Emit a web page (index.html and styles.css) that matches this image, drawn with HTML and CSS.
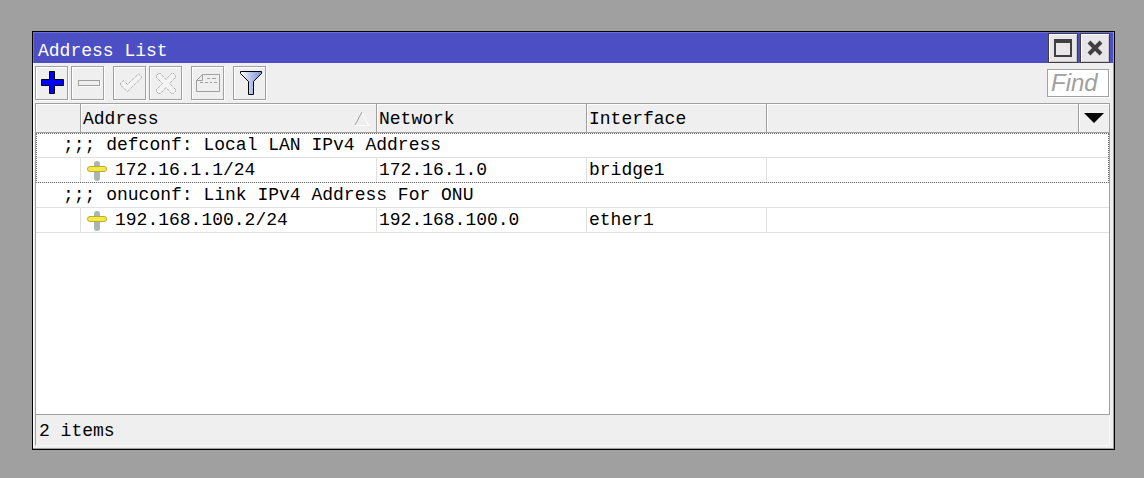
FILE: index.html
```html
<!DOCTYPE html>
<html lang="en">
<head>
<meta charset="utf-8">
<title>Address List</title>
<link rel="stylesheet" href="styles.css">
</head>
<body>
<main class="window">
  <header class="titlebar">
    <h1 class="title">Address List</h1>
    <button class="win-btn" aria-label="Maximize"><svg width="28" height="28" viewBox="0 0 28 28"><path d="M5 5H23V23H5ZM7 9V21H21V9Z" fill="#404040" fill-rule="evenodd"/></svg></button>
    <button class="win-btn" aria-label="Close"><svg width="28" height="28" viewBox="0 0 28 28"><path d="M8 8L20 20M20 8L8 20" stroke="#404040" stroke-width="4"/></svg></button>
  </header>
  <div class="toolbar">
    <div class="group">
      <button class="tool" aria-label="Add"><svg width="31" height="32" viewBox="0 0 31 32"><path d="M13.500 4.500H18.500V12.500H27.500V18.500H18.500V26.500H13.500V18.500H5.500V12.500H13.500Z" fill="#00f" stroke="#000"/></svg></button>
      <button class="tool" aria-label="Remove"><svg width="31" height="32" viewBox="0 0 31 32"><path d="M7 19.500H28.500V14" fill="none" stroke="#fff"/><rect x="6.500" y="13.500" width="21" height="5" fill="#efefef" stroke="#a0a0a0"/></svg></button>
    </div>
    <div class="group">
      <button class="tool" aria-label="Enable"><svg width="31" height="32" viewBox="0 0 31 32"><path d="M6.500 16.500L9.500 13.500L13.500 17.500L24.500 7L27.500 9.500V11L13.500 24.500L6.500 18Z" fill="#f4f4f4" stroke="#909090" stroke-dasharray="1 1"/></svg></button>
      <button class="tool" aria-label="Disable"><svg width="31" height="32" viewBox="0 0 31 32"><path d="M8.500 6.500H10.500L16 12.500L21.500 6.500H23.500L25.500 8.500V10.500L19.500 16.500L25.500 22.500V24.500L23.500 26.500H21.500L16 20.500L10.500 26.500H8.500L6.500 24.500V22.500L12.500 16.500L6.500 10.500V8.500Z" fill="#f4f4f4" stroke="#909090" stroke-dasharray="1 1"/></svg></button>
    </div>
    <button class="tool" aria-label="Comment"><svg width="31" height="32" viewBox="0 0 31 32"><path d="M10.500 7.500H27.500V24.500H4.500V13.500L10.500 7.500V13.500H4.500M15 11.500H18M20 11.500H24M8 15.500H11M13 15.500H16M18 15.500H20M22 15.500H25" fill="none" stroke="#a0a0a0"/></svg></button>
    <button class="tool" aria-label="Filter"><svg width="31" height="32" viewBox="0 0 31 32"><defs><linearGradient id="steel"><stop offset="0" stop-color="#fff"/><stop offset=".5" stop-color="#b4c2ec"/><stop offset="1" stop-color="#8094d4"/></linearGradient></defs><path d="M6.500 4.500H27.500V6.500L19.500 14.500V27.500H14.500V14.500L6.500 6.500Z" fill="url(#steel)" stroke="#000"/></svg></button>
    <input class="find" type="text" placeholder="Find" aria-label="Find">
  </div>
  <section class="pane">
    <table class="grid">
      <colgroup><col class="c-flag"><col class="c-address"><col class="c-network"><col class="c-interface"><col><col class="c-menu"></colgroup>
      <thead>
        <tr>
          <th></th>
          <th><div class="sorted">Address<svg width="16" height="16" viewBox="0 0 16 16"><path d="M8 1L14.500 14.500H1" fill="none" stroke="#fff"/><path d="M1 14L8 1" stroke="#a0a0a0" stroke-width="1"/></svg></div></th>
          <th>Network</th>
          <th>Interface</th>
          <th></th>
          <th class="menu-cell"><button class="menu" aria-label="Columns"><svg width="20" height="10" viewBox="0 0 20 10"><path d="M0 0H20L10 10Z"/></svg></button></th>
        </tr>
      </thead>
      <tbody class="current">
        <tr class="comment"><td colspan="6">;;; defconf: Local LAN IPv4 Address</td></tr>
        <tr>
          <td></td>
          <td><div class="address"><svg width="20" height="20" viewBox="0 0 20 20"><rect x="7" width="6" height="20" rx="3" fill="#a9b5b2"/><rect x=".5" y="5.500" width="19" height="5" rx="2.500" fill="#f5e84a" stroke="#b9ad2a"/></svg>172.16.1.1/24</div></td>
          <td>172.16.1.0</td>
          <td>bridge1</td>
          <td colspan="2"></td>
        </tr>
      </tbody>
      <tbody>
        <tr class="comment"><td colspan="6">;;; onuconf: Link IPv4 Address For ONU</td></tr>
        <tr>
          <td></td>
          <td><div class="address"><svg width="20" height="20" viewBox="0 0 20 20"><rect x="7" width="6" height="20" rx="3" fill="#a9b5b2"/><rect x=".5" y="5.500" width="19" height="5" rx="2.500" fill="#f5e84a" stroke="#b9ad2a"/></svg>192.168.100.2/24</div></td>
          <td>192.168.100.0</td>
          <td>ether1</td>
          <td colspan="2"></td>
        </tr>
      </tbody>
    </table>
  </section>
  <footer class="status">2 items</footer>
</main>
</body>
</html>
```

FILE: styles.css
```css
* { box-sizing: border-box; }

body {
  margin: 0;
  min-height: 100vh;
  padding: 31px 29px 28px 32px;
  display: flex;
  background: #a0a0a0;
  color: #000;
  font: 18px/24px "Liberation Mono", monospace;
}

svg { display: block; flex: none; }
button { padding: 0; color: inherit; font: inherit; }

.window {
  flex: 1;
  min-width: 0;
  display: flex;
  flex-direction: column;
  border: 1px solid #000;
  background: #efefef;
  box-shadow: inset -1px -1px #a0a0a0, inset 1px 1px #fff;
  padding-bottom: 3px;
}

.titlebar {
  display: flex;
  align-items: center;
  gap: 2px;
  padding: 1px 3px 0 5px;
  background: #4c4fc4;
  border-right: 1px solid #a0a0a0;
  box-shadow: inset 1px 1px #6c6fd8;
}

.title {
  flex: 1;
  margin: 0;
  padding-top: 5px;
  font-size: 18px;
  font-weight: 400;
  color: #fff;
}

.win-btn {
  width: 30px;
  height: 30px;
  border: 1px solid #404040;
  background: #e8e6e8;
  box-shadow: inset 1px 1px #fff, inset -1px -1px #c8c8c8;
}

.toolbar {
  display: flex;
  align-items: center;
  gap: 9px;
  padding: 3px 5px 3px 2px;
}

.group { display: flex; gap: 3px; }

.tool {
  width: 33px;
  height: 34px;
  border: 1px solid #a0a0a0;
  background: #efefef;
  box-shadow: inset 1px 1px #fff, 1px 1px #fff;
}

.find {
  width: 62px;
  height: 28px;
  margin-left: auto;
  padding: 0 3px;
  border: 1px solid #a0a0a0;
  background: #fff;
  box-shadow: 1px 1px #fff;
  font: italic 24px/26px "Liberation Sans", Arial, sans-serif;
}

.find::placeholder { color: #a0a0a0; opacity: 1; }

.pane {
  flex: 1;
  margin: 0 4px 0 2px;
  border: 1px solid #a0a0a0;
  background: #fff;
}

.grid {
  width: 100%;
  table-layout: fixed;
  border-collapse: separate;
  border-spacing: 0;
}

.c-flag { width: 45px; }
.c-address { width: 296px; }
.c-network { width: 210px; }
.c-interface { width: 180px; }
.c-menu { width: 30px; }

th, td {
  padding: 1px 2px 0;
  text-align: left;
  font-weight: 400;
  white-space: nowrap;
}

th {
  height: 29px;
  padding-top: 2px;
  border-right: 1px solid #a0a0a0;
  border-bottom: 1px solid #a0a0a0;
  background: #efefef;
  box-shadow: inset 1px 1px #fff;
}

th:last-child, td:last-child { border-right: 0; }

td {
  height: 25px;
  line-height: 23px;
  border-right: 1px solid #e0e0e0;
  border-bottom: 1px solid #e0e0e0;
}

.comment td { padding-left: 27px; }
.current { outline: 1px dotted #707070; outline-offset: -1px; }

.sorted {
  display: flex;
  align-items: center;
  justify-content: space-between;
  padding-right: 4px;
}

.address {
  display: flex;
  align-items: center;
  gap: 8px;
  padding-left: 4px;
}

.menu-cell { padding: 0; }

.menu {
  width: 100%;
  height: 26px;
  display: grid;
  place-items: center;
  border: 0;
  background: none;
}

.status {
  margin: 0 4px 0 2px;
  padding: 4px 3px 2px;
  border: 1px solid #f8f8f8;
  border-top: 0;
  border-left-color: #a0a0a0;
}
```
